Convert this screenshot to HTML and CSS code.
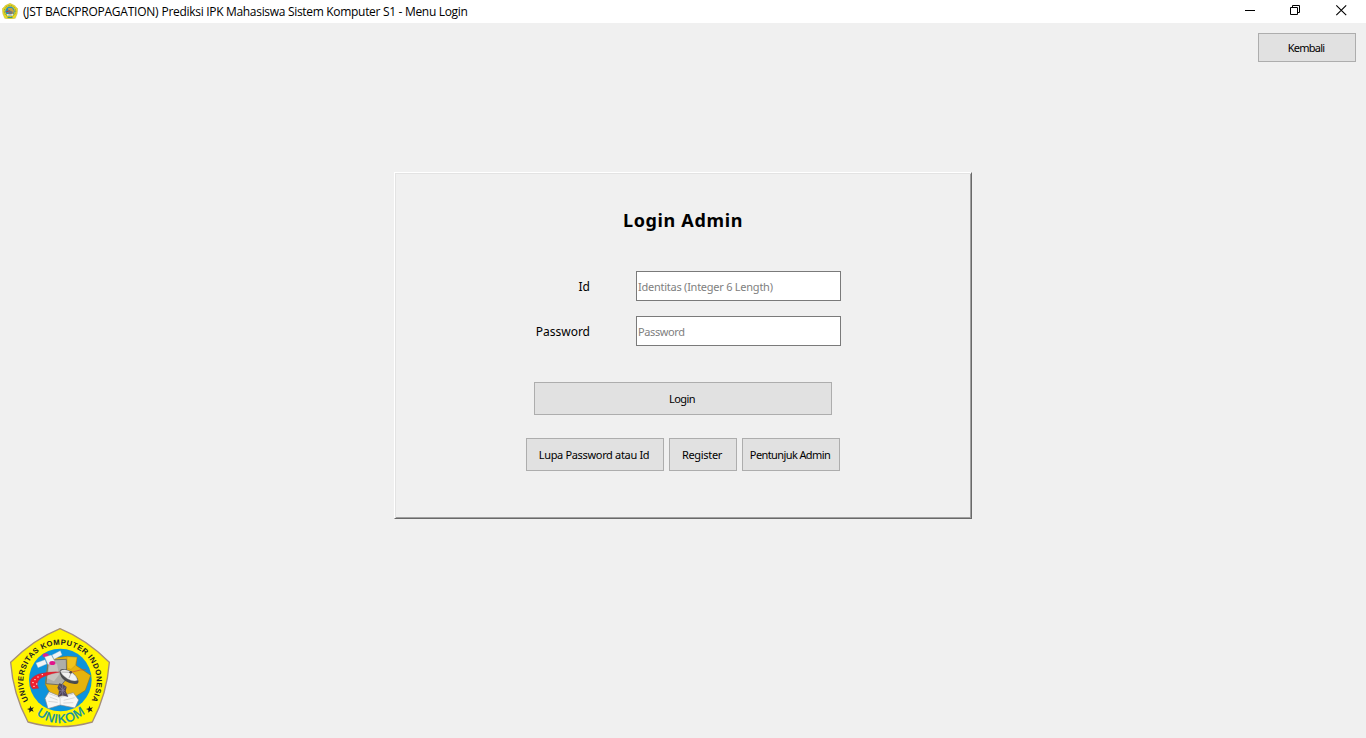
FILE: index.html
```html
<!DOCTYPE html>
<html lang="id">
<head>
<meta charset="utf-8">
<title>Menu Login</title>
<link rel="stylesheet" href="styles.css">
</head>
<body>
<header class="titlebar">
  <svg class="app-icon" viewBox="0 0 16 16">
    <path d="M8 .3Q12.500 1.500 15.800 5.800Q15.800 11 13.300 15.300Q8 16.500 2.700 15.300Q.2 11 .2 5.800Q3.500 1.500 8 .3Z" fill="#e8dc20" stroke="#b5a550" stroke-width=".4"/>
    <circle cx="8" cy="8.200" r="5.700" fill="none" stroke="#8a8638" stroke-width="1" stroke-dasharray="1 .7"/>
    <circle cx="8" cy="8.200" r="4.700" fill="#278fc0"/>
    <path d="M6 5h4l2 3-1 3H7z" fill="#c9a53c"/>
    <path d="M4 9l4-1.500" stroke="#c33" stroke-width="1"/>
    <path d="M7 7l4 2-2 3H6z" fill="#777"/>
    <path d="M5 11l3 .6 3-.6v1.500H5z" fill="#eee"/>
    <path d="M5.500 14.500h5" stroke="#3a9a80" stroke-width="1"/>
  </svg>
  <span class="title"><span class="t1">(JST BACKPROPAGATION)</span> <span class="t2">Prediksi IPK Mahasiswa Sistem Komputer S1 - Menu Login</span></span>
  <svg class="controls" viewBox="0 0 138 23" fill="none" stroke="#000">
    <path d="M17 10.500h10"/>
    <path d="M62.500 7.500h7v7h-7zM64.500 7V5.500h7v7H70"/>
    <path d="M108.300 5.300l9.900 9.900M118.200 5.300l-9.900 9.900" stroke-width="1.100"/>
  </svg>
</header>
<main class="window">
  <div class="topline"><button class="btn back">Kembali</button></div>
  <section class="panel">
    <h1 class="heading">Login Admin</h1>
    <div class="row"><label class="label" for="id">Id</label><input class="field f-id" id="id" placeholder="Identitas (Integer 6 Length)"></div>
    <div class="row"><label class="label" for="pw">Password</label><input class="field f-pw" id="pw" type="password" placeholder="Password"></div>
    <button class="btn login">Login</button>
    <div class="actions">
      <button class="btn forgot">Lupa Password atau Id</button>
      <button class="btn register">Register</button>
      <button class="btn guide">Pentunjuk Admin</button>
    </div>
  </section>
  <svg class="logo" viewBox="0 0 360 354">
    <defs>
      <path id="ring" d="M85.500 241A110 110 0 1 1 275.500 239"/>
      <path id="base" d="M103 278Q180 342 260 276"/>
    </defs>
    <path d="M180 26Q259 58 328 127Q321 222 277 306Q180 334 84 306Q39 222 32 127Q101 58 180 26Z" fill="#fff500" stroke="#a58e78" stroke-width="4" stroke-linejoin="round"/>
    <circle cx="181" cy="180" r="94" fill="#0d93dc"/>
    <path d="M145 117L201 109L231 112L228 136L272 166L256 211L215 237L160 232L143 207L136 193Z" fill="#e6b30c" stroke="#9c7911" stroke-width="2"/>
    <path d="M201 110L231 112L226 136L213 148L202 145Z" fill="#f0c41c" stroke="#b18b15"/>
    <path d="M145 120L199 118L200 176L184 195L138 191Z" fill="#aeaea9" stroke="#75705c" stroke-width="3"/>
    <path d="M150 129l21 2 6 33-15 20-20-9z" fill="#c6c3be"/>
    <path d="M135 235L147 215L180 229L220 218L236 240L225 264L181 255L144 266Z" fill="#f6f6f6" stroke="#888" stroke-width="2"/>
    <path d="M145 220l35 13 1 22M182 232l38-10M149 231l24 9M145 244l28 3M191 241l33-8M190 249l30-1" stroke="#c7c7c7" stroke-width="2" fill="none"/>
    <path d="M91 186Q91 172 116 162Q148 154 179 156Q128 166 117 180Q108 190 116 205L98 207Q90 199 91 186Z" fill="#ef1e2d" stroke="#a73543" stroke-width="1"/>
    <path d="M97 188h4M103 179h4M112 171h4M125 164h4M100 199h4M108 192h4" stroke="#fff" stroke-width="3"/>
    <path d="M178 190l13 4 9 7-3 13 8 17-18-5-13 5 3-19-5-9z" fill="#51475b"/>
    <path d="M178 197l18 24M197 200l-20 25M188 191v37M175 211h20" stroke="#8b82a0" stroke-width="2"/>
    <path d="M179 153Q181 143 202 149Q222 156 232 174Q239 187 232 191Q215 195 196 183Q179 171 179 153Z" fill="#4c4c4e"/>
    <path d="M181 153Q192 145 211 154Q230 166 233 181Q221 187 202 176Q184 165 181 153Z" fill="#f2f2f2" stroke="#777"/>
    <path d="M184 156L214 157L207 174" fill="none" stroke="#8f8f8f" stroke-width="2"/>
    <path d="M213 157L241 150L259 149" fill="none" stroke="#c54b36" stroke-width="2"/>
    <circle cx="212" cy="157" r="4" fill="#544747"/>
    <ellipse cx="137" cy="106" rx="9" ry="6" fill="#dc248e"/>
    <g fill="#f0f4f5" stroke="#9badb5">
      <path d="M108 129L135 119L140 132L114 143Z"/>
      <path d="M156 105L181 92L186 105L162 118Z"/>
      <path d="M134 111L154 105L164 124L144 134Z"/>
    </g>
    <ellipse cx="157" cy="129" rx="9" ry="6" fill="#e0148b"/>
    <text class="ring-text"><textPath href="#ring" textLength="464">UNIVERSITAS KOMPUTER INDONESIA</textPath></text>
    <text class="unikom"><textPath href="#base" startOffset="8" textLength="160">UNIKOM</textPath></text>
    <path d="M91 257l3 7 8-2-5 6 4 7-7-3-6 6v-8l-7-3 8-2z" fill="#222"/>
    <path d="M268 257l3 7 8-2-5 6 4 7-7-3-6 6v-8l-7-3 8-2z" fill="#222"/>
  </svg>
</main>
</body>
</html>
```
FILE: styles.css
```css
* { box-sizing: border-box; }
body { margin: 0; width: 1366px; height: 738px; overflow: hidden; background: #f0f0f0; color: #000; font-family: "Noto Sans", sans-serif; display: flex; flex-direction: column; }
.titlebar { height: 23px; flex: none; background: #fff; display: flex; padding-left: 2px; }
.app-icon { width: 16px; height: 16px; margin: 3px 5px 0 0; }
.title { flex: 1; font: 12px/23px "Open Sans", sans-serif; white-space: nowrap; }
.t1 { letter-spacing: -.23px; }
.t2 { letter-spacing: -.31px; }
.controls { width: 138px; height: 23px; }
.window { flex: 1; display: flex; flex-direction: column; }
.topline { height: 149px; padding: 10px 10px 0 0; display: flex; justify-content: flex-end; align-items: flex-start; }
.btn { border: 1px solid #adadad; background: #e1e1e1; color: #000; font: 11px/15px "Noto Sans", sans-serif; padding: 0; white-space: nowrap; }
.back { width: 98px; height: 29px; padding-right: 2px; letter-spacing: -.75px; }
.panel { width: 578px; height: 347px; margin-left: 394px; border: 1px solid; border-color: #fff #696969 #696969 #fff; box-shadow: inset 1px 1px #e3e3e3, inset -1px -1px #a0a0a0; }
.heading { margin: 33px 0 36px; height: 29px; font: bold 18px/29px "Noto Sans", sans-serif; letter-spacing: .65px; text-align: center; }
.row { display: flex; height: 30px; margin-bottom: 15px; }
.label { width: 195px; margin-right: 46px; text-align: right; font-size: 12px; line-height: 32px; }
.field { width: 205px; height: 30px; border: 1px solid #7a7a7a; border-radius: 0; background: #fff; padding: 0 1px; font: 11px "Noto Sans", sans-serif; }
.f-id { letter-spacing: -.25px; }
.f-pw { letter-spacing: -.4px; }
.field::placeholder { color: #808080; opacity: 1; }
.login { display: block; width: 298px; height: 33px; margin: 36px 0 23px 139px; padding-right: 2px; letter-spacing: -.6px; }
.actions { display: flex; gap: 5px; margin-left: 131px; }
.actions .btn { height: 33px; }
.actions .forgot { width: 138px; padding-right: 2px; letter-spacing: -.33px; }
.actions .register { width: 68px; padding-right: 2px; letter-spacing: -.3px; }
.actions .guide { width: 98px; padding-right: 2px; letter-spacing: -.6px; }
.logo { width: 120px; height: 118px; margin-top: auto; }
.ring-text { font: bold 23px "Liberation Sans", sans-serif; fill: #222; }
.unikom { font: 37px "Liberation Sans", sans-serif; fill: #078fa8; stroke: #078fa8; stroke-width: 1px; }
```
